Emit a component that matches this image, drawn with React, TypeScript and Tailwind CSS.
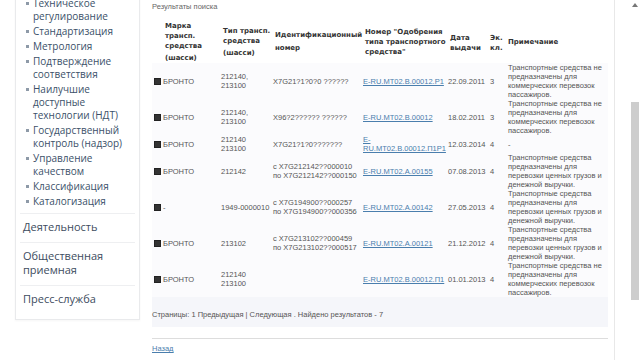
const passengers = ['Транспортные средства не', 'предназначены для', 'коммерческих перевозок', 'пассажиров.'];
const cash = ['Транспортные средства', 'предназначены для', 'перевозки ценных грузов и', 'денежной выручки.'];

interface Row {
  mark: string;
  type: string[];
  vin: string[];
  link: string[];
  date: string;
  eco: string;
  note: string[];
}

const rows: Row[] = [
  { mark: 'БРОНТО', type: ['212140,', '213100'], vin: ['X7G21?1?0?0 ??????'], link: ['E-RU.MT02.B.00012.P1'], date: '22.09.2011', eco: '3', note: passengers },
  { mark: 'БРОНТО', type: ['212140,', '213100'], vin: ['X96?2?????? ??????'], link: ['E-RU.MT02.B.00012'], date: '18.02.2011', eco: '3', note: passengers },
  { mark: 'БРОНТО', type: ['212140', '213100'], vin: ['X7G21?1?0???????'], link: ['E-', 'RU.MT02.B.00012.П1P1'], date: '12.03.2014', eco: '4', note: ['-'] },
  { mark: 'БРОНТО', type: ['212142'], vin: ['с X7G212142??000010', 'по X7G212142??000150'], link: ['E-RU.MT02.A.00155'], date: '07.08.2013', eco: '4', note: cash },
  { mark: '-', type: ['1949-0000010'], vin: ['с X7G194900??000257', 'по X7G194900??000356'], link: ['E-RU.MT02.A.00142'], date: '27.05.2013', eco: '4', note: cash },
  { mark: 'БРОНТО', type: ['213102'], vin: ['с X7G213102??000459', 'по X7G213102??000517'], link: ['E-RU.MT02.A.00121'], date: '21.12.2012', eco: '4', note: cash },
  { mark: 'БРОНТО', type: ['212140', '213100'], vin: [], link: ['E-RU.MT02.B.00012.П1'], date: '01.01.2013', eco: '4', note: passengers },
];

const menu: string[][] = [
  ['Техническое', 'регулирование'],
  ['Стандартизация'],
  ['Метрология'],
  ['Подтверждение', 'соответствия'],
  ['Наилучшие', 'доступные', 'технологии (НДТ)'],
  ['Государственный', 'контроль (надзор)'],
  ['Управление', 'качеством'],
  ['Классификация'],
  ['Каталогизация'],
];

function Lines({ items }: { items: string[] }) {
  return (
    <>
      {items.map((l, i) => (
        <span key={i} className="block">{l}</span>
      ))}
    </>
  );
}

export default function App() {
  return (
    <div className="w-[640px] h-[360px] overflow-hidden bg-white flex">
      <div className="w-[614px] flex shrink-0">
        {/* Sidebar */}
        <aside className="ml-[15px] w-[125px] self-start -mt-[5px] bg-white border border-[#e9eaec] shadow-[0_1px_2px_rgba(0,0,0,0.04)] font-['Open_Sans',sans-serif] text-[#3b5069]">
          <ul className="pt-[0.5px] pb-[5px] pl-[10px] flex flex-col gap-[2px] text-[10px] leading-[13px]">
            {menu.map((item, i) => (
              <li key={i} className="flex">
                <span className="w-[3px] h-[3px] bg-[#8e9aa8] mt-[5px] mr-[4px] shrink-0" />
                <span>
                  <Lines items={item} />
                </span>
              </li>
            ))}
          </ul>
          <div className="mx-[4px] border-t border-[#eeeff1]" />
          <div className="px-[7px] pt-[6px] pb-[8px] text-[11px] leading-[14px] text-[#3d4c5e]">Деятельность</div>
          <div className="mx-[4px] border-t border-[#eeeff1]" />
          <div className="px-[7px] pt-[6px] pb-[8px] text-[11px] leading-[14px] text-[#3d4c5e]">
            Общественная
            <br />
            приемная
          </div>
          <div className="mx-[4px] border-t border-[#eeeff1]" />
          <div className="px-[7px] pt-[6px] pb-[13px] text-[11px] leading-[14px] text-[#3d4c5e]">Пресс-служба</div>
        </aside>

        {/* Main */}
        <main className="ml-[12px] w-[456px] font-['Liberation_Sans',Arial,sans-serif] text-[7.5px] text-[#555]">
          <p className="mt-[2px] h-[18px] leading-[10px] text-[#666]">Результаты поиска</p>
          <table className="table-fixed border-collapse w-[456px]">
            <colgroup>
              <col className="w-[67px]" />
              <col className="w-[52px]" />
              <col className="w-[90px]" />
              <col className="w-[85px]" />
              <col className="w-[42px]" />
              <col className="w-[18px]" />
              <col className="w-[102px]" />
            </colgroup>
            <thead>
              <tr className="h-[43px] font-['DejaVu_Sans',Verdana,sans-serif] font-bold text-[7px] leading-[10px] text-[#333] text-left whitespace-nowrap">
                <th className="pl-[13px] align-middle font-bold">
                  Марка
                  <br />
                  трансп.
                  <br />
                  средства
                  <span className="block mt-[2px]">(шасси)</span>
                </th>
                <th className="pl-[4px] align-middle font-bold">
                  Тип трансп.
                  <br />
                  средства
                  <span className="block mt-[2px]">(шасси)</span>
                </th>
                <th className="pl-[4px] align-middle font-bold">
                  Идентификационный
                  <span className="block mt-[3px]">номер</span>
                </th>
                <th className="pl-[4px] align-middle font-bold">
                  Номер "Одобрения
                  <br />
                  типа транспортного
                  <br />
                  средства"
                </th>
                <th className="pl-[4px] align-middle font-bold pt-[2px]">
                  Дата
                  <br />
                  выдачи
                </th>
                <th className="pl-[2px] align-middle font-bold pt-[2px]">
                  Эк.
                  <br />
                  кл.
                </th>
                <th className="pl-[2px] align-middle font-bold">Примечание</th>
              </tr>
            </thead>
            <tbody className="bg-[#fbfbfd] leading-[9px] whitespace-nowrap">
              {rows.map((r, i) => (
                <tr key={i}>
                  <td className="pl-[2px] align-middle">
                    <span className="inline-block w-[7px] h-[7px] bg-[#333] border border-[#222] align-[-1px] mr-[2px]" />
                    {r.mark}
                  </td>
                  <td className="pl-[2px] align-middle">
                    <Lines items={r.type} />
                  </td>
                  <td className="pl-[2px] align-middle">
                    <Lines items={r.vin} />
                  </td>
                  <td className="pl-[2px] align-middle">
                    <a href="#" className="text-[#4a7ead] underline">
                      <Lines items={r.link} />
                    </a>
                  </td>
                  <td className="pl-[2px] align-middle">{r.date}</td>
                  <td className="pl-[2px] align-middle">{r.eco}</td>
                  <td className="pl-[2px] align-middle">
                    <Lines items={r.note} />
                  </td>
                </tr>
              ))}
            </tbody>
          </table>
          <div className="h-[30px] bg-[#f5f6fa] flex items-center pt-[6px]">
            <span className="leading-[10px]">Страницы: 1 Предыдущая | Следующая . Найдено результатов - 7</span>
          </div>
          <div className="mt-[11px] border-t border-[#dddddd]" />
          <a href="#" className="block mt-[5px] leading-[10px] text-[#4a7ead] underline">Назад</a>
        </main>
      </div>

      {/* Scrollbar */}
      <div className="w-[26px] border-l border-[#e8e8e8] flex flex-col pl-[16px]">
        <span className="mt-[3px] ml-[1px] w-0 h-0 border-l-[3px] border-r-[3px] border-b-[4px] border-l-transparent border-r-transparent border-b-[#777]" />
        <span className="mt-[95px] w-[8px] h-[198px] bg-[#cdcdcd]" />
      </div>
    </div>
  );
}
